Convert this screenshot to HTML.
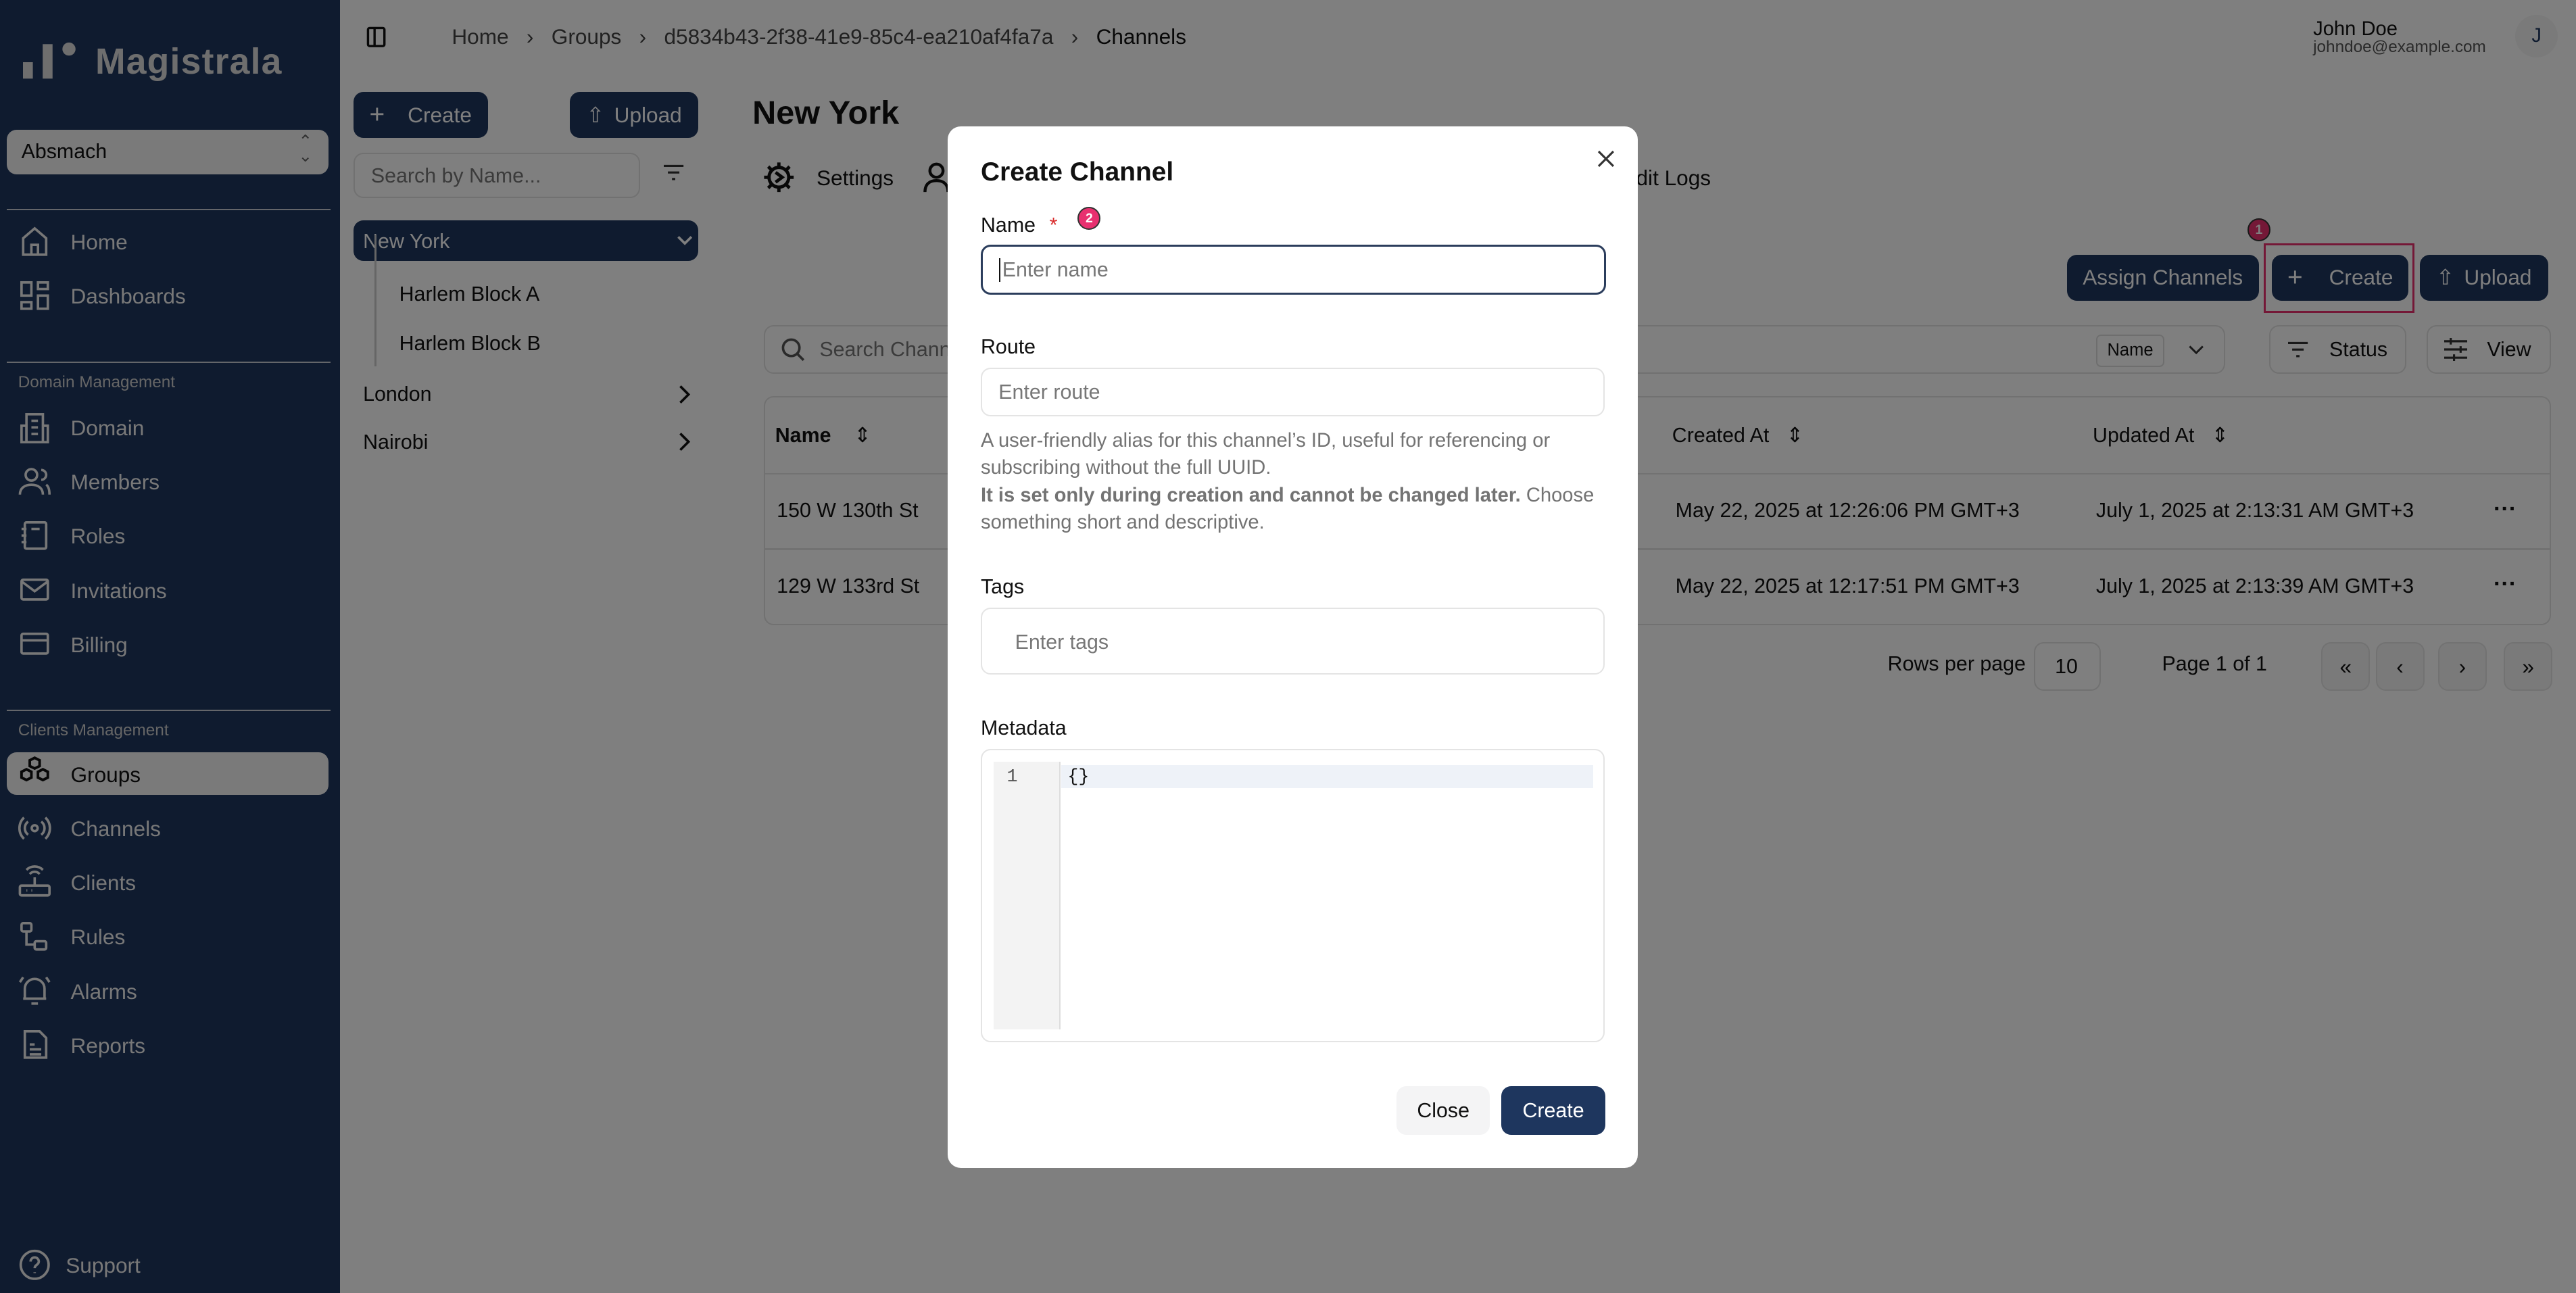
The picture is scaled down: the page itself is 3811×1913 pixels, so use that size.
<!DOCTYPE html>
<html><head><meta charset="utf-8"><style>
html,body{margin:0;padding:0;overflow:hidden;background:#fff}
#w{zoom:2.4305;width:1568px;height:787px;position:relative;font-family:"Liberation Sans",sans-serif;color:#111;background:#fff;overflow:hidden}
.a{position:absolute;white-space:nowrap}
.sb{left:0;top:0;width:207px;height:787px;background:#1e365e}
.si{position:absolute;left:43px;font-size:13px;color:#f1f1f1}
.ic{position:absolute;left:11px;width:20px;height:20px}
.hr{position:absolute;left:4px;width:197px;height:1px;background:#c8ccd4}
.btn{position:absolute;background:#1e365e;color:#fff;border-radius:6px;font-size:13px;display:flex;align-items:center;justify-content:center}
.ob{position:absolute;border:1px solid #e2e2e2;border-radius:6px;background:#fff}
.ov{position:absolute;left:0;top:0;width:1568px;height:787px;background:rgba(0,0,0,.5)}
.md{position:absolute;left:577px;top:77px;width:420px;height:634px;background:#fff;border-radius:8px}
.lb{position:absolute;left:20px;font-size:12.5px;color:#111}
.in{position:absolute;left:20px;width:378px;border:1px solid #e4e4e4;border-radius:6px;font-size:12.5px;color:#777}
.pg{position:absolute;top:391px;width:28px;height:28px;border:1px solid #e4e4e4;border-radius:6px;background:#f4f4f5;font-size:13px;display:flex;align-items:center;justify-content:center}
.badge{position:absolute;width:14px;height:14px;border-radius:50%;background:#e8306f;color:#fff;font-size:8px;font-weight:bold;display:flex;align-items:center;justify-content:center;border:1px solid #333;box-sizing:border-box}
svg{overflow:visible}
</style></head><body><div id="w">
<div class="a sb">
 <svg class="a" style="left:14px;top:24px" width="34" height="24"><rect x="0" y="14" width="6" height="10" fill="#ddd"/><rect x="12" y="3" width="6" height="21" fill="#ddd"/><circle cx="28" cy="6" r="4" fill="#ddd"/></svg>
 <div class="a" style="left:58px;top:25px;font-size:22px;font-weight:bold;color:#ddd;letter-spacing:.5px">Magistrala</div>
 <div class="a" style="left:4px;top:79px;width:196px;height:27px;background:#f4f4f5;border-radius:6px"><span class="a" style="left:9px;top:6px;font-size:12.5px">Absmach</span><span class="a" style="right:10px;top:3px;font-size:10px;color:#666;line-height:9px">⌃<br>⌄</span></div>
 <div class="hr" style="top:127px"></div>
 <svg class="ic" style="top:137px" viewBox="0 0 20 20" fill="none" stroke="#eee" stroke-width="1.5"><path d="M3 18V8l7-6 7 6v10zM8 18v-6h4v6"/></svg><div class="si" style="top:140px">Home</div>
 <svg class="ic" style="top:170px" viewBox="0 0 20 20" fill="none" stroke="#eee" stroke-width="1.5"><rect x="2" y="2" width="6" height="8"/><rect x="12" y="2" width="6" height="4"/><rect x="12" y="10" width="6" height="8"/><rect x="2" y="14" width="6" height="4"/></svg><div class="si" style="top:173px">Dashboards</div>
 <div class="hr" style="top:220px"></div>
 <div class="a" style="left:11px;top:227px;font-size:10px;color:#ccc">Domain Management</div>
 <svg class="ic" style="top:250px" viewBox="0 0 20 20" fill="none" stroke="#eee" stroke-width="1.5"><rect x="5" y="2" width="10" height="17"/><path d="M2 9h3v10H2zM15 9h3v10h-3M8 6h4M8 10h4M8 14h4"/></svg><div class="si" style="top:253px">Domain</div>
 <svg class="ic" style="top:283px" viewBox="0 0 20 20" fill="none" stroke="#eee" stroke-width="1.5"><circle cx="8" cy="6" r="3.5"/><path d="M1 18c0-4 3-6 7-6s7 2 7 6M14 3a3 3 0 010 6M17 12c1.5 1 2 3 2 6"/></svg><div class="si" style="top:286px">Members</div>
 <svg class="ic" style="top:316px" viewBox="0 0 20 20" fill="none" stroke="#eee" stroke-width="1.5"><rect x="4" y="2" width="13" height="16" rx="1"/><path d="M2 6h3M2 10h3M2 14h3M8 6h5"/></svg><div class="si" style="top:319px">Roles</div>
 <svg class="ic" style="top:349px" viewBox="0 0 20 20" fill="none" stroke="#eee" stroke-width="1.5"><rect x="2" y="4" width="16" height="12" rx="1"/><path d="M2 5l8 6 8-6"/></svg><div class="si" style="top:352px">Invitations</div>
 <svg class="ic" style="top:382px" viewBox="0 0 20 20" fill="none" stroke="#eee" stroke-width="1.5"><rect x="2" y="4" width="16" height="12" rx="1"/><path d="M2 8h16"/></svg><div class="si" style="top:385px">Billing</div>
 <div class="hr" style="top:432px"></div>
 <div class="a" style="left:11px;top:439px;font-size:10px;color:#ccc">Clients Management</div>
 <div class="a" style="left:4px;top:458px;width:196px;height:26px;background:#f4f4f5;border-radius:6px"></div>
 <svg class="ic" style="top:461px" viewBox="0 0 20 20" fill="none" stroke="#111" stroke-width="1.6"><path d="M7 2l3-1.5 3 1.5v3.5l-3 1.5-3-1.5zM2 9l3-1.5 3 1.5v3.5l-3 1.5-3-1.5zM12 9l3-1.5 3 1.5v3.5l-3 1.5-3-1.5z"/></svg><div class="si" style="top:464px;color:#111">Groups</div>
 <svg class="ic" style="top:494px" viewBox="0 0 20 20" fill="none" stroke="#eee" stroke-width="1.5"><circle cx="10" cy="10" r="1.8"/><path d="M6 6a5 5 0 000 8M14 6a5 5 0 010 8M3.5 3.5a9 9 0 000 13M16.5 3.5a9 9 0 010 13"/></svg><div class="si" style="top:497px">Channels</div>
 <svg class="ic" style="top:527px" viewBox="0 0 20 20" fill="none" stroke="#eee" stroke-width="1.5"><rect x="1" y="12" width="18" height="6" rx="1"/><path d="M10 12V7M7 5a4 4 0 016 0M5 2.5a7 7 0 0110 0M5 15h.5M8 15h.5"/></svg><div class="si" style="top:530px">Clients</div>
 <svg class="ic" style="top:560px" viewBox="0 0 20 20" fill="none" stroke="#eee" stroke-width="1.5"><rect x="2" y="2" width="6" height="5" rx="1"/><rect x="10" y="13" width="7" height="5" rx="1"/><path d="M5 7v8h5"/></svg><div class="si" style="top:563px">Rules</div>
 <svg class="ic" style="top:593px" viewBox="0 0 20 20" fill="none" stroke="#eee" stroke-width="1.5"><path d="M4 15V9a6 6 0 0112 0v6h1H3zM8 18h4M1 5l2-3M19 5l-2-3"/></svg><div class="si" style="top:596px">Alarms</div>
 <svg class="ic" style="top:626px" viewBox="0 0 20 20" fill="none" stroke="#eee" stroke-width="1.5"><path d="M4 2h9l4 4v12H4zM7 10h3M7 13h7M7 16h7"/></svg><div class="si" style="top:629px">Reports</div>
 <svg class="ic" style="top:760px" viewBox="0 0 20 20" fill="none" stroke="#eee" stroke-width="1.5"><circle cx="10" cy="10" r="8.5"/><path d="M7.5 8a2.5 2.5 0 115 0c0 2-2.5 2-2.5 4M10 14.5v.5"/></svg><div class="si" style="top:763px;left:40px">Support</div>
</div>

<svg class="a" style="left:223px;top:16px" width="12" height="13" fill="none" stroke="#111" stroke-width="1.4"><rect x="1" y="1" width="10" height="11" rx="1"/><path d="M5 1v11"/></svg>
<div class="a" style="left:275px;top:15px;font-size:13px;color:#444">Home &nbsp;&nbsp;›&nbsp;&nbsp; Groups &nbsp;&nbsp;›&nbsp;&nbsp; d5834b43-2f38-41e9-85c4-ea210af4fa7a &nbsp;&nbsp;›&nbsp;&nbsp; <span style="color:#111">Channels</span></div>
<div class="a" style="left:1408px;top:11px;font-size:12px">John Doe</div>
<div class="a" style="left:1408px;top:23px;font-size:10px;color:#555">johndoe@example.com</div>
<div class="a" style="left:1531px;top:9px;width:26px;height:26px;border-radius:50%;background:#f4f4f5;font-size:12px;color:#1e365e;display:flex;align-items:center;justify-content:center">J</div>

<div class="btn" style="left:215px;top:56px;width:82px;height:28px"><span style="font-size:16px;margin-right:14px">+</span>Create</div>
<div class="btn" style="left:347px;top:56px;width:78px;height:28px"><span style="font-size:13px;margin-right:6px">⇧</span>Upload</div>
<div class="ob" style="left:215px;top:93px;width:173px;height:26px"><span class="a" style="left:10px;top:6px;font-size:12.5px;color:#777">Search by Name...</span></div>
<svg class="a" style="left:404px;top:100px" width="12" height="10" stroke="#333" stroke-width="1.3"><path d="M0 1h12M2.5 5h7M5 9h2"/></svg>
<div class="a" style="left:215px;top:134px;width:210px;height:25px;background:#1e365e;border-radius:6px"><span class="a" style="left:6px;top:6px;font-size:12.5px;color:#fff">New York</span><svg class="a" style="left:197px;top:9px" width="10" height="7" fill="none" stroke="#fff" stroke-width="1.5"><path d="M1 1l4 4 4-4"/></svg></div>
<div class="a" style="left:228px;top:143px;width:1px;height:80px;background:#ccc"></div>
<div class="a" style="left:243px;top:172px;font-size:12.5px">Harlem Block A</div>
<div class="a" style="left:243px;top:202px;font-size:12.5px">Harlem Block B</div>
<div class="a" style="left:221px;top:233px;font-size:12.5px">London</div>
<div class="a" style="left:221px;top:262px;font-size:12.5px">Nairobi</div>
<svg class="a" style="left:413px;top:234px" width="7" height="12" fill="none" stroke="#111" stroke-width="1.5"><path d="M1 1l5 5-5 5"/></svg>
<svg class="a" style="left:413px;top:263px" width="7" height="12" fill="none" stroke="#111" stroke-width="1.5"><path d="M1 1l5 5-5 5"/></svg>

<div class="a" style="left:458px;top:57px;font-size:20px;font-weight:bold">New York</div>
<svg class="a" style="left:464px;top:98px" width="20" height="20" fill="none" stroke="#111" stroke-width="2"><circle cx="10" cy="10" r="6"/><path d="M10 1v3M10 16v3M1 10h3M16 10h3M3.5 3.5l2 2M14.5 14.5l2 2M3.5 16.5l2-2M14.5 5.5l2-2M8 7l4 3-4 3"/></svg>
<div class="a" style="left:497px;top:101px;font-size:13px">Settings</div>
<svg class="a" style="left:562px;top:98px" width="16" height="20" fill="none" stroke="#111" stroke-width="1.8"><circle cx="8" cy="6" r="4"/><path d="M1 19c0-5 3-7 7-7s7 2 7 7"/></svg>
<div class="a" style="left:980px;top:101px;font-size:13px">Audit Logs</div>

<div class="btn" style="left:1258px;top:155px;width:117px;height:28px">Assign Channels</div>
<div class="btn" style="left:1383px;top:155px;width:83px;height:28px"><span style="font-size:16px;margin-right:16px">+</span>Create</div>
<div class="a" style="left:1378px;top:148px;width:89px;height:40px;border:1.5px solid #e8306f"></div>
<div class="badge" style="left:1368px;top:133px">1</div>
<div class="btn" style="left:1473px;top:155px;width:78px;height:28px"><span style="margin-right:6px">⇧</span>Upload</div>

<div class="ob" style="left:465px;top:198px;width:888px;height:28px">
 <svg class="a" style="left:10px;top:7px" width="14" height="14" fill="none" stroke="#555" stroke-width="1.5"><circle cx="6" cy="6" r="5"/><path d="M10 10l3.5 3.5"/></svg>
 <span class="a" style="left:33px;top:7px;font-size:12.5px;color:#777">Search Channels...</span>
 <div class="a" style="left:810px;top:5px;width:40px;height:18px;border:1px solid #ddd;border-radius:3px;font-size:10.5px;text-align:center;line-height:18px">Name</div>
 <svg class="a" style="left:866px;top:11px" width="10" height="6" fill="none" stroke="#333" stroke-width="1.2"><path d="M1 1l4 4 4-4"/></svg>
</div>
<div class="ob" style="left:1381px;top:198px;width:82px;height:28px"><svg class="a" style="left:11px;top:9px" width="12" height="10" stroke="#333" stroke-width="1.3"><path d="M0 1h12M2.5 5h7M5 9h2"/></svg><span class="a" style="left:36px;top:7px;font-size:12.5px">Status</span></div>
<div class="ob" style="left:1477px;top:198px;width:74px;height:28px"><svg class="a" style="left:10px;top:7px" width="14" height="14" stroke="#333" stroke-width="1.3"><path d="M0 2h14M0 7h14M0 12h14M4 0v4M10 5v4M6 10v4"/></svg><span class="a" style="left:36px;top:7px;font-size:12.5px">View</span></div>

<div class="ob" style="left:465px;top:241px;width:1086px;height:138px">
 <div class="a" style="left:0;top:46px;width:1086px;height:1px;background:#e4e4e4"></div>
 <div class="a" style="left:0;top:92px;width:1086px;height:1px;background:#e4e4e4"></div>
 <div class="a" style="left:6px;top:16px;font-size:12.5px;font-weight:bold">Name &nbsp;&nbsp;&nbsp;<span style="font-weight:normal">⇕</span></div>
 <div class="a" style="left:552px;top:16px;font-size:12.5px">Created At &nbsp;&nbsp;⇕</div>
 <div class="a" style="left:808px;top:16px;font-size:12.5px">Updated At &nbsp;&nbsp;⇕</div>
 <div class="a" style="left:7px;top:62px;font-size:12.5px">150 W 130th St</div>
 <div class="a" style="left:7px;top:108px;font-size:12.5px">129 W 133rd St</div>
 <div class="a" style="left:554px;top:62px;font-size:12.5px">May 22, 2025 at 12:26:06 PM GMT+3</div>
 <div class="a" style="left:554px;top:108px;font-size:12.5px">May 22, 2025 at 12:17:51 PM GMT+3</div>
 <div class="a" style="left:810px;top:62px;font-size:12.5px">July 1, 2025 at 2:13:31 AM GMT+3</div>
 <div class="a" style="left:810px;top:108px;font-size:12.5px">July 1, 2025 at 2:13:39 AM GMT+3</div>
 <div class="a" style="left:1052px;top:60px;font-size:14px;font-weight:bold">···</div>
 <div class="a" style="left:1052px;top:106px;font-size:14px;font-weight:bold">···</div>
</div>
<div class="a" style="left:1149px;top:397px;font-size:12.5px">Rows per page</div>
<div class="ob" style="left:1238px;top:391px;width:39px;height:28px"><span class="a" style="left:12px;top:7px;font-size:12.5px">10</span></div>
<div class="a" style="left:1316px;top:397px;font-size:12.5px">Page 1 of 1</div>
<div class="pg" style="left:1413px">«</div><div class="pg" style="left:1446px">‹</div><div class="pg" style="left:1484px">›</div><div class="pg" style="left:1524px">»</div>

<div class="ov"></div>

<div class="md">
 <div class="a" style="left:20px;top:19px;font-size:16px;font-weight:bold">Create Channel</div>
 <svg class="a" style="left:396px;top:15px" width="9" height="9" stroke="#333" stroke-width="1.3"><path d="M0 0l9 9M9 0L0 9"/></svg>
 <div class="lb" style="top:53px">Name <span style="color:#d92b2b;margin-left:5px">*</span></div>
 <div class="badge" style="left:79px;top:49px">2</div>
 <div class="in" style="top:72px;height:28px;border:1.5px solid #2b3d5c"><span class="a" style="left:10px;top:7px;border-left:1px solid #111;padding-left:1px">Enter name</span></div>
 <div class="lb" style="top:127px">Route</div>
 <div class="in" style="top:147px;height:28px"><span class="a" style="left:10px;top:7px">Enter route</span></div>
 <div class="a" style="left:20px;top:183px;font-size:12px;color:#737373;line-height:16.6px;white-space:normal;width:385px">A user-friendly alias for this channel’s ID, useful for referencing or subscribing without the full UUID.<br><b>It is set only during creation and cannot be changed later.</b> Choose something short and descriptive.</div>
 <div class="lb" style="top:273px">Tags</div>
 <div class="in" style="top:293px;height:39px"><span class="a" style="left:20px;top:13px">Enter tags</span></div>
 <div class="lb" style="top:359px">Metadata</div>
 <div class="in" style="top:379px;height:177px">
  <div class="a" style="left:7px;top:7px;width:40px;height:163px;background:#f3f3f3;border-right:1px solid #ddd"></div>
  <div class="a" style="left:48px;top:9px;width:324px;height:14px;background:#eef2f8"></div>
  <div class="a" style="left:15px;top:10px;font-family:'Liberation Mono',monospace;font-size:11px;color:#555">1</div>
  <div class="a" style="left:52px;top:10px;font-family:'Liberation Mono',monospace;font-size:11px;color:#111">{}</div>
 </div>
 <div class="a" style="left:273px;top:584px;width:57px;height:30px;background:#f4f4f5;border-radius:6px;font-size:12.5px;text-align:center;line-height:30px">Close</div>
 <div class="a" style="left:337px;top:584px;width:63px;height:30px;background:#1e365e;color:#fff;border-radius:6px;font-size:12.5px;text-align:center;line-height:30px">Create</div>
</div>
</div></body></html>
